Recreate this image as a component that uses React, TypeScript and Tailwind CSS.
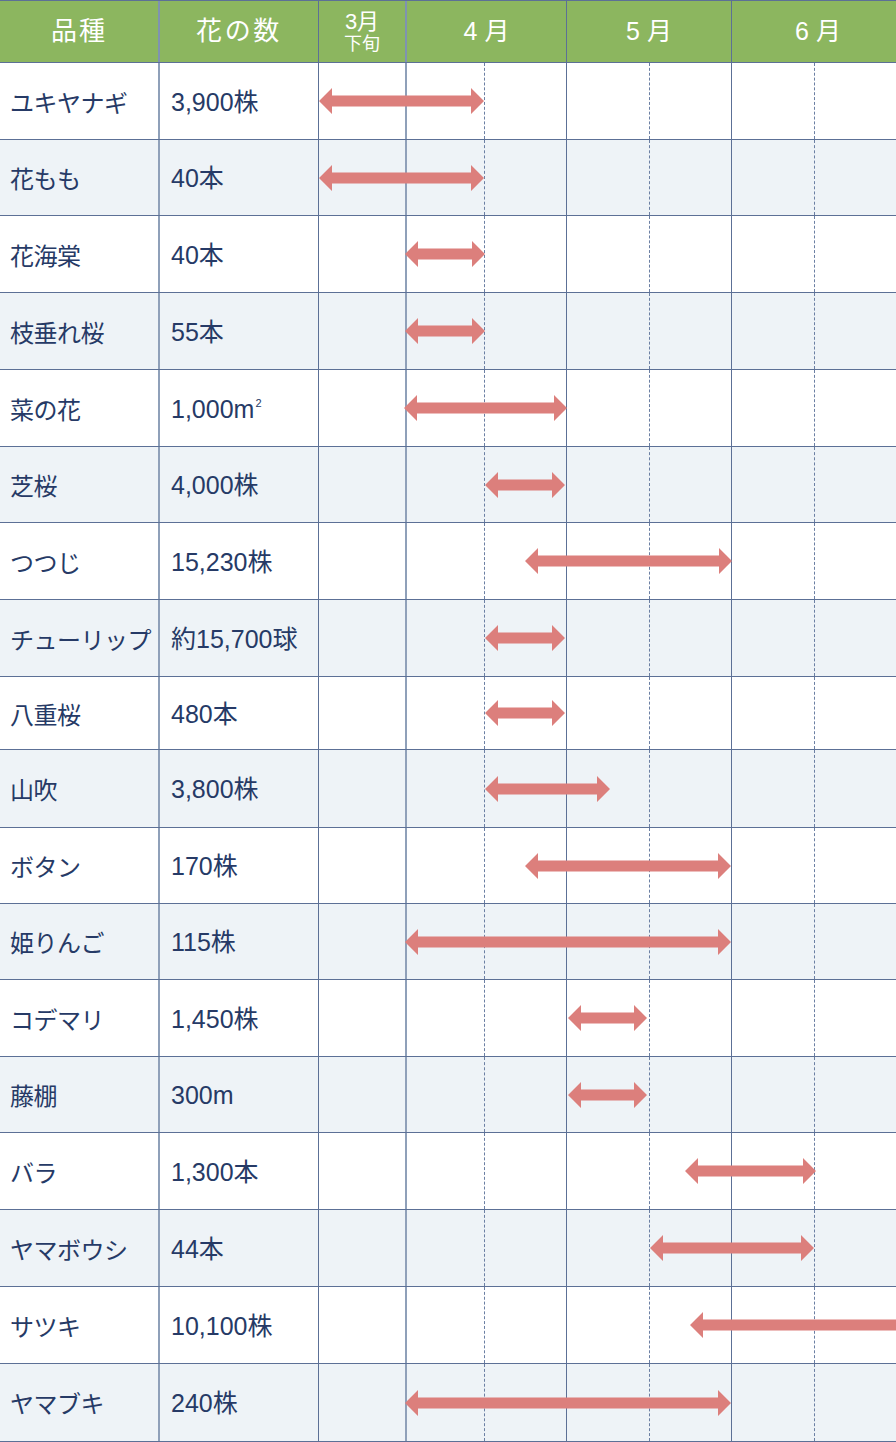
import React from "react";

type Row = {
  name: string;
  count: React.ReactNode;
  h: string;
  bg: string;
  start: number;
  end: number;
  noRight?: boolean;
};

const W = "bg-white";
const G = "bg-[#eef3f7]";

const rows: Row[] = [
  { name: "ユキヤナギ", count: "3,900株", h: "h-[77px]", bg: W, start: 319, end: 484 },
  { name: "花もも", count: "40本", h: "h-[76px]", bg: G, start: 319, end: 484 },
  { name: "花海棠", count: "40本", h: "h-[77px]", bg: W, start: 405, end: 485 },
  { name: "枝垂れ桜", count: "55本", h: "h-[77px]", bg: G, start: 405, end: 485 },
  {
    name: "菜の花",
    count: (
      <>
        <span>1,000m</span>
        <span className="text-[11px] leading-none self-start mt-[25px] ml-[1px]">2</span>
      </>
    ),
    h: "h-[77px]",
    bg: W,
    start: 404,
    end: 567,
  },
  { name: "芝桜", count: "4,000株", h: "h-[76px]", bg: G, start: 485, end: 565 },
  { name: "つつじ", count: "15,230株", h: "h-[77px]", bg: W, start: 525, end: 732 },
  { name: "チューリップ", count: "約15,700球", h: "h-[77px]", bg: G, start: 485, end: 565 },
  { name: "八重桜", count: "480本", h: "h-[73px]", bg: W, start: 485, end: 565 },
  { name: "山吹", count: "3,800株", h: "h-[78px]", bg: G, start: 485, end: 610 },
  { name: "ボタン", count: "170株", h: "h-[76px]", bg: W, start: 525, end: 731 },
  { name: "姫りんご", count: "115株", h: "h-[76px]", bg: G, start: 405, end: 731 },
  { name: "コデマリ", count: "1,450株", h: "h-[77px]", bg: W, start: 568, end: 647 },
  { name: "藤棚", count: "300m", h: "h-[76px]", bg: G, start: 568, end: 647 },
  { name: "バラ", count: "1,300本", h: "h-[77px]", bg: W, start: 685, end: 816 },
  { name: "ヤマボウシ", count: "44本", h: "h-[77px]", bg: G, start: 650, end: 814 },
  { name: "サツキ", count: "10,100株", h: "h-[77px]", bg: W, start: 690, end: 896, noRight: true },
  { name: "ヤマブキ", count: "240株", h: "h-[77px]", bg: G, start: 405, end: 731 },
];

function Arrow({ start, end, noRight }: { start: number; end: number; noRight?: boolean }) {
  const w = end - start;
  const hl = 13;
  const pts = noRight
    ? `0,13 ${hl},0 ${hl},7.5 ${w},7.5 ${w},18.5 ${hl},18.5 ${hl},26`
    : `0,13 ${hl},0 ${hl},7.5 ${w - hl},7.5 ${w - hl},0 ${w},13 ${w - hl},26 ${w - hl},18.5 ${hl},18.5 ${hl},26`;
  return (
    <svg
      className="absolute top-1/2 -translate-y-1/2"
      style={{ left: start, width: w }}
      width={w}
      height={26}
      viewBox={`0 0 ${w} 26`}
    >
      <polygon points={pts} fill="#dc7f7c" />
    </svg>
  );
}

export default function App() {
  const font = "font-['Liberation_Sans','Noto_Sans_CJK_JP',sans-serif]";
  return (
    <div className={`w-[896px] bg-white ${font} text-[#263a66]`}>
      {/* header */}
      <div className="flex h-[62px] border-t border-[#5c7096] bg-[#8cb65f] text-white">
        <div className="w-[158px] flex items-center justify-center text-[26px] tracking-[0.08em]">品種</div>
        <div className="w-[160px] flex items-center justify-center border-l-2 border-[#7f93b0] text-[26px] tracking-[0.1em]">
          花の数
        </div>
        <div className="w-[87px] flex flex-col items-center justify-center border-l border-[#5c7096] leading-none">
          <span className="text-[22px]">3月</span>
          <span className="text-[18px] mt-[2px]">下旬</span>
        </div>
        <div className="w-[161px] flex items-center justify-center border-l-2 border-[#7f93b0] text-[25px]">4 月</div>
        <div className="w-[165px] flex items-center justify-center border-l border-[#5c7096] text-[25px]">5 月</div>
        <div className="w-[165px] flex items-center justify-center border-l border-[#5c7096] text-[25px] pl-[8px]">
          6 月
        </div>
      </div>
      {rows.map((r, i) => (
        <div
          key={i}
          className={`relative flex ${r.h} border-t border-[#5c7096] ${r.bg} ${
            i === rows.length - 1 ? "box-content border-b" : ""
          }`}
        >
          <div className="w-[158px] flex items-center pl-[10px] text-[24px] pt-[5px] whitespace-nowrap tracking-[-0.02em]">
            {r.name}
          </div>
          <div className="w-[160px] flex items-center pl-[11px] border-l-2 border-[#8fa0b9] text-[25px] pt-[3px] whitespace-nowrap">
            {r.count}
          </div>
          <div className="w-[87px] border-l border-[#5c7096]" />
          <div className="w-[161px] flex border-l-2 border-[#8fa0b9]">
            <div className="w-[77px]" />
            <div className="flex-1 border-l border-dashed border-[#6b7fa3]" />
          </div>
          <div className="w-[165px] flex border-l border-[#5c7096]">
            <div className="w-[82px]" />
            <div className="flex-1 border-l border-dashed border-[#6b7fa3]" />
          </div>
          <div className="w-[165px] flex border-l border-[#5c7096]">
            <div className="w-[82px]" />
            <div className="flex-1 border-l border-dashed border-[#6b7fa3]" />
          </div>
          <Arrow start={r.start} end={r.end} noRight={r.noRight} />
        </div>
      ))}
    </div>
  );
}
